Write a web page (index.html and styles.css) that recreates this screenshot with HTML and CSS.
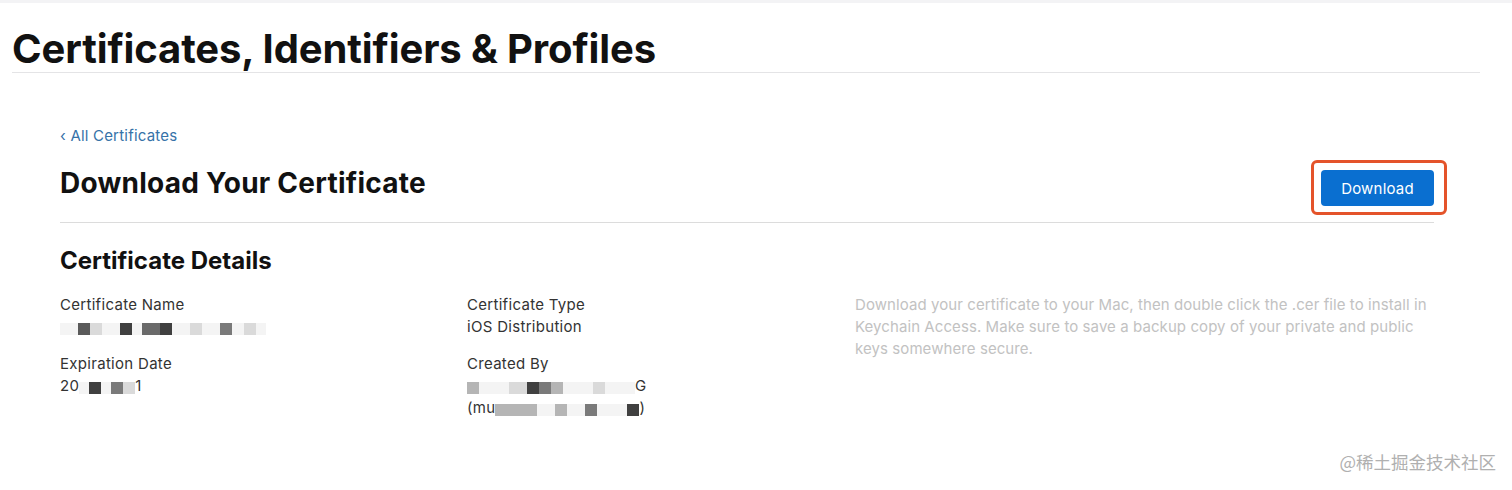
FILE: index.html
```html
<!DOCTYPE html>
<html lang="en">
<head>
<meta charset="utf-8">
<title>Certificates, Identifiers &amp; Profiles</title>
<link rel="stylesheet" href="styles.css">
</head>
<body>
<div class="topstrip"></div>
<header class="pagehead">
  <h1 class="pagetitle">Certificates, Identifiers &amp; Profiles</h1>
</header>
<main class="content">
  <a class="backlink" href="#">‹ All Certificates</a>
  <div class="titlebar">
    <h2 class="cert-title">Download Your Certificate</h2>
    <div class="highlight">
      <button class="btn-download">Download</button>
    </div>
  </div>
  <section class="details">
    <h3 class="details-title">Certificate Details</h3>
    <div class="grid">
      <div class="col">
        <div class="field">
          <div class="label">Certificate Name</div>
          <div class="value">
            <i class="b w3 l1"></i><i class="b w2 d1"></i><i class="b w2 l2"></i><i class="b w3 l1"></i><i class="b w2 d2"></i><i class="b w1 l1"></i><i class="b w3 d3"></i><i class="b w2 d2"></i><i class="b w3 l1"></i><i class="b w2 l2"></i><i class="b w3 l1"></i><i class="b w2 d4"></i><i class="b w2 l1"></i><i class="b w2 l2"></i><i class="b w1 l1"></i>
          </div>
        </div>
        <div class="field">
          <div class="label">Expiration Date</div>
          <div class="value">20<i class="b w1 l1"></i><i class="b w2 d2"></i><i class="b w1 l1"></i><i class="b w2 d4"></i><i class="b w2 l2"></i>1</div>
        </div>
      </div>
      <div class="col">
        <div class="field">
          <div class="label">Certificate Type</div>
          <div class="value">iOS Distribution</div>
        </div>
        <div class="field">
          <div class="label">Created By</div>
          <div class="value"><i class="b w2 d5"></i><i class="b w4 l1"></i><i class="b w3 l2"></i><i class="b w2 d2"></i><i class="b w2 d4"></i><i class="b w2 d5"></i><i class="b w4 l1"></i><i class="b w2 l2"></i><i class="b w4 l1"></i>G</div>
          <div class="value">(mu<i class="b w4 d5"></i><i class="b w2 d5"></i><i class="b w3 l1"></i><i class="b w2 d5"></i><i class="b w3 l1"></i><i class="b w2 d4"></i><i class="b w4 l1"></i><i class="b w2 d2"></i>)</div>
        </div>
      </div>
      <div class="col">
        <p class="note">Download your certificate to your Mac, then double click the .cer file to install in Keychain Access. Make sure to save a backup copy of your private and public keys somewhere secure.</p>
      </div>
    </div>
  </section>
</main>
<div class="watermark">@稀土掘金技术社区</div>
</body>
</html>
```

FILE: styles.css
```css
html, body {
  margin: 0;
  padding: 0;
  background: #ffffff;
}
body {
  width: 1512px;
  height: 490px;
  overflow: hidden;
  position: relative;
  font-family: Inter, "Noto Sans", "Liberation Sans", sans-serif;
  color: #1d1d1f;
}
.topstrip {
  height: 3px;
  background: #f3f3f5;
}
.pagehead {
  margin: 0 32px 0 12px;
  border-bottom: 1px solid #e4e4e6;
}
.pagetitle {
  margin: 0;
  font-size: 40px;
  font-weight: 700;
  letter-spacing: -0.12px;
  line-height: 48px;
  padding-top: 22px;
  height: 47px;
  color: #111;
}
.content {
  margin: 0 78px 0 60px;
  padding-top: 54px;
}
.backlink {
  display: block;
  font-size: 15px;
  line-height: 18px;
  letter-spacing: 0.2px;
  color: #3672a8;
  text-decoration: none;
}
.titlebar {
  display: flex;
  justify-content: space-between;
  align-items: flex-start;
  border-bottom: 1px solid #dcdcdc;
  height: 83px;
  margin-top: -6px;
}
.cert-title {
  margin: 27px 0 0 0;
  font-size: 28px;
  line-height: 34px;
  font-weight: 700;
  letter-spacing: 0.25px;
  color: #111;
}
.highlight {
  border: 3px solid #e4532a;
  border-radius: 6px;
  padding: 7px 10px 6px 7px;
  margin-right: -13px;
  margin-top: 21px;
}
.btn-download {
  display: block;
  width: 113px;
  height: 36px;
  background: #0a6fd0;
  border: none;
  border-radius: 4px;
  color: #fff;
  font-family: Inter, "Noto Sans", "Liberation Sans", sans-serif;
  font-size: 15px;
  letter-spacing: 0.2px;
  padding: 0;
}
.details {
  padding-top: 24px;
}
.details-title {
  margin: 0;
  font-size: 24px;
  font-weight: 700;
  line-height: 28px;
  color: #111;
}
.grid {
  display: grid;
  grid-template-columns: 407px 388px 580px;
  margin-top: 19px;
}
.field {
  margin-bottom: 15px;
}
.label, .value {
  font-size: 15px;
  line-height: 22px;
  letter-spacing: 0.3px;
  color: #333;
}
.value {
  display: flex;
  align-items: center;
  height: 22px;
}
.b {
  display: inline-block;
  height: 12px;
  margin-top: 3px;
}
.w1 { width: 10px; }
.w2 { width: 12px; }
.w3 { width: 18px; }
.w4 { width: 30px; }
.l1 { background: #f4f4f4; }
.l2 { background: #dadada; }
.d1 { background: #5a5a5a; }
.d2 { background: #404040; }
.d3 { background: #6a6a6a; }
.d4 { background: #7a7a7a; }
.d5 { background: #b5b5b5; }
.note {
  margin: 0;
  font-size: 15px;
  line-height: 22px;
  letter-spacing: 0.08px;
  color: #c2c2c2;
  max-width: 580px;
}
.watermark {
  position: absolute;
  right: 16px;
  top: 451px;
  font-family: "Noto Sans CJK SC", "Noto Sans", sans-serif;
  font-size: 17.5px;
  color: #b0b0b0;
  line-height: 22px;
}
```
